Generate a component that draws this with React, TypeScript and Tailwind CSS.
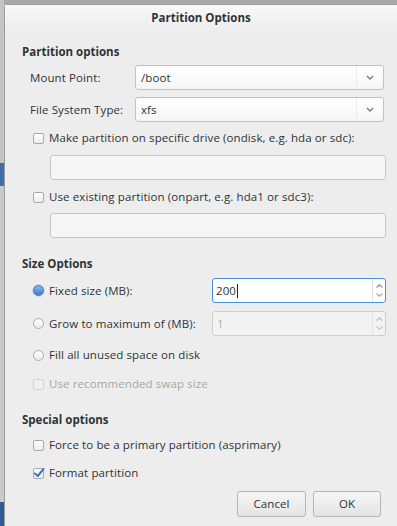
import type { ReactNode } from 'react';

const Chevron = () => (
  <svg width="8" height="5" viewBox="0 0 8 5" className="block">
    <path d="M1 1 L4 4 L7 1" fill="none" stroke="#777" strokeWidth="1.3" />
  </svg>
);

const SpinArrows = ({ dim }: { dim?: boolean }) => (
  <div className="w-[13px] h-full flex flex-col items-center justify-center gap-[5px] border-l border-[#e4e4e4]">
    <svg width="7" height="4" viewBox="0 0 7 4" className="block">
      <path d="M0.5 3.5 L3.5 0.8 L6.5 3.5" fill="none" stroke={dim ? '#b9b9b9' : '#8a8a8a'} strokeWidth="1.1" />
    </svg>
    <svg width="7" height="4" viewBox="0 0 7 4" className="block">
      <path d="M0.5 0.5 L3.5 3.2 L6.5 0.5" fill="none" stroke={dim ? '#c8c8c8' : '#a8a8a8'} strokeWidth="1.1" />
    </svg>
  </div>
);

const Combo = ({ value }: { value: string }) => (
  <div className="w-[249px] h-[25px] flex items-center rounded-[3px] border border-[#c2c2bf] bg-gradient-to-b from-[#ffffff] to-[#f6f6f6]">
    <span className="flex-1 pl-[5px]">{value}</span>
    <div className="w-[27px] h-full flex items-center justify-center border-l border-[#ececec]">
      <Chevron />
    </div>
  </div>
);

const CheckBox = ({ checked, disabled }: { checked?: boolean; disabled?: boolean }) => (
  <div
    className={`relative w-[11px] h-[11px] rounded-[2px] border ${
      disabled ? 'border-[#d2d2d2] bg-[#f0f0f0]' : 'border-[#a9a9a9] bg-gradient-to-b from-[#ffffff] to-[#ececec]'
    }`}
  >
    {checked && (
      <svg width="12" height="11" viewBox="0 0 12 11" className="absolute -left-[1px] -top-[2px]">
        <path d="M2 6.5 L4.8 9 L10.5 2" fill="none" stroke="#3a78c8" strokeWidth="2" strokeLinecap="round" strokeLinejoin="round" />
      </svg>
    )}
  </div>
);

const Radio = ({ checked }: { checked?: boolean }) =>
  checked ? (
    <div className="w-[11px] h-[11px] rounded-full border border-[#3d6fb0] bg-gradient-to-b from-[#8ab8ee] to-[#3a7ad0] shadow-[0_0_0_1px_rgba(120,160,220,0.25)]" />
  ) : (
    <div className="w-[11px] h-[11px] rounded-full border border-[#a9a9a9] bg-gradient-to-b from-[#ffffff] to-[#ebebeb]" />
  );

const OptRow = ({ mark, children, className, dim }: { mark: ReactNode; children: ReactNode; className?: string; dim?: boolean }) => (
  <div className={`h-[16px] flex items-center pl-[11px] ${className ?? ''}`}>
    <div className="w-[16px] flex items-center">{mark}</div>
    <span className={dim ? 'text-[#a6a6a6]' : ''}>{children}</span>
  </div>
);

const Heading = ({ children, className }: { children: ReactNode; className?: string }) => (
  <div className={`h-[15px] leading-[15px] font-bold tracking-normal ${className ?? ''}`}>{children}</div>
);

export default function App() {
  return (
    <div
      className="w-[397px] h-[526px] flex overflow-hidden bg-[#b9b9b9] text-[11.5px] tracking-[0.1px] text-[#2e3436]"
      style={{ fontFamily: '"Open Sans", "Noto Sans", sans-serif' }}
    >
      <div className="w-[4px] flex flex-col">
        <div className="h-[163px] bg-[#c4c4c4]" />
        <div className="h-[23px] bg-[#3d6ea8]" />
        <div className="h-[316px] bg-[#c9c9c9]" />
        <div className="flex-1 bg-[#2d5c96]" />
      </div>
      <div className="flex-1 flex flex-col">
        <div className="h-[4px] bg-[#a9a9a9]" />
        <div className="flex-1 flex flex-col bg-[#ededed] rounded-tl-[4px] border-t border-l border-[#9d9d9d]">
          <div className="h-[26px] flex items-center justify-center font-bold tracking-normal bg-gradient-to-b from-[#f8f8f8] to-[#ededed]">
            Partition Options
          </div>

          <div className="flex flex-col pl-[17px] pr-[11px]">
            <Heading className="mt-[13px]">Partition options</Heading>

            <div className="mt-[6px] flex items-center">
              <span className="w-[113px] pl-[8px]">Mount Point:</span>
              <Combo value="/boot" />
            </div>
            <div className="mt-[7px] flex items-center">
              <span className="w-[113px] pl-[8px]">File System Type:</span>
              <Combo value="xfs" />
            </div>

            <OptRow className="mt-[8px]" mark={<CheckBox />}>
              Make partition on specific drive (ondisk, e.g. hda or sdc):
            </OptRow>
            <div className="mt-[9px] ml-[28px] h-[25px] rounded-[3px] border border-[#c6c6c3] bg-[#f6f6f6]" />

            <OptRow className="mt-[9px]" mark={<CheckBox />}>
              Use existing partition (onpart, e.g. hda1 or sdc3):
            </OptRow>
            <div className="mt-[8px] ml-[28px] h-[25px] rounded-[3px] border border-[#c6c6c3] bg-[#f6f6f6]" />

            <Heading className="mt-[18px]">Size Options</Heading>

            <div className="mt-[7px] flex items-center">
              <OptRow className="w-[190px]" mark={<Radio checked />}>
                Fixed size (MB):
              </OptRow>
              <div className="flex-1 h-[25px] flex items-center rounded-[3px] border border-[#4a90d9] bg-white">
                <span className="flex-1 pl-[3px] flex items-center">
                  200<span className="inline-block w-[1px] h-[14px] bg-[#222] ml-[1px]" />
                </span>
                <SpinArrows />
              </div>
            </div>
            <div className="mt-[8px] flex items-center">
              <OptRow className="w-[190px]" mark={<Radio />}>
                Grow to maximum of (MB):
              </OptRow>
              <div className="flex-1 h-[25px] flex items-center rounded-[3px] border border-[#cfcfcc] bg-[#f3f3f3] text-[#b0b0b0]">
                <span className="flex-1 pl-[4px]">1</span>
                <SpinArrows dim />
              </div>
            </div>

            <OptRow className="mt-[11px]" mark={<Radio />}>
              Fill all unused space on disk
            </OptRow>
            <OptRow className="mt-[13px]" mark={<CheckBox disabled />} dim>
              Use recommended swap size
            </OptRow>

            <Heading className="mt-[20px]">Special options</Heading>

            <OptRow className="mt-[10px]" mark={<CheckBox />}>
              Force to be a primary partition (asprimary)
            </OptRow>
            <OptRow className="mt-[12px]" mark={<CheckBox checked />}>
              Format partition
            </OptRow>

            <div className="mt-[10px] flex justify-end gap-[7px] pr-[5px]">
              <button className="w-[69px] h-[26px] rounded-[3px] border border-[#b6b6b3] bg-gradient-to-b from-[#f6f6f6] to-[#e4e4e4]">
                Cancel
              </button>
              <button className="w-[68px] h-[26px] rounded-[3px] border border-[#b6b6b3] bg-gradient-to-b from-[#f6f6f6] to-[#e4e4e4]">
                OK
              </button>
            </div>
          </div>
        </div>
      </div>
    </div>
  );
}
